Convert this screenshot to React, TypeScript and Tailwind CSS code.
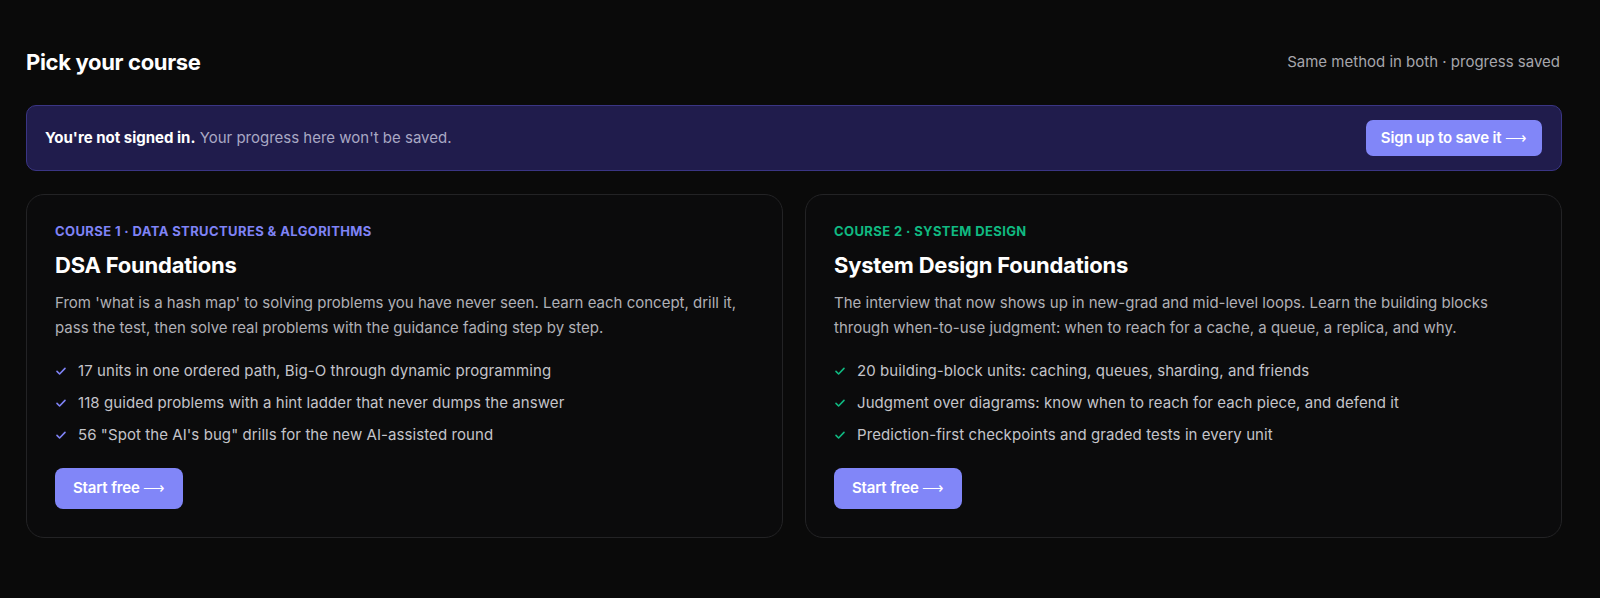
import React from 'react';

type Course = {
  label: string;
  title: string;
  description: string;
  points: string[];
  accent: 'indigo' | 'green';
};

const courses: Course[] = [
  {
    label: 'Course 1 · Data Structures & Algorithms',
    title: 'DSA Foundations',
    description:
      "From 'what is a hash map' to solving problems you have never seen. Learn each concept, drill it, pass the test, then solve real problems with the guidance fading step by step.",
    points: [
      '17 units in one ordered path, Big-O through dynamic programming',
      '118 guided problems with a hint ladder that never dumps the answer',
      '56 "Spot the AI\'s bug" drills for the new AI-assisted round',
    ],
    accent: 'indigo',
  },
  {
    label: 'Course 2 · System Design',
    title: 'System Design Foundations',
    description:
      'The interview that now shows up in new-grad and mid-level loops. Learn the building blocks through when-to-use judgment: when to reach for a cache, a queue, a replica, and why.',
    points: [
      '20 building-block units: caching, queues, sharding, and friends',
      'Judgment over diagrams: know when to reach for each piece, and defend it',
      'Prediction-first checkpoints and graded tests in every unit',
    ],
    accent: 'green',
  },
];

const Check: React.FC<{ className: string }> = ({ className }) => (
  <svg width="12" height="12" viewBox="0 0 12 12" fill="none" className={className}>
    <path d="M2 6.4l2.6 2.6L10 3.4" stroke="currentColor" strokeWidth="1.6" strokeLinecap="round" strokeLinejoin="round" />
  </svg>
);

const Arrow = () => <span className="font-['Liberation_Sans',sans-serif] font-normal">⟶</span>;

const CourseCard: React.FC<{ course: Course }> = ({ course }) => {
  const accentText = course.accent === 'indigo' ? 'text-[#7f83f6]' : 'text-[#10b981]';
  return (
    <div className="rounded-[18px] border border-[#232325] bg-[#0b0b0c] px-7 pt-7 pb-7">
      <div className={`text-[13px] leading-4 font-bold uppercase tracking-[0.03em] ${accentText}`}>{course.label}</div>
      <h3 className="mt-3 text-[22px] leading-7 font-bold tracking-[-0.01em] text-white">{course.title}</h3>
      <p className="mt-[11px] text-[15px] leading-[25px] text-[#b0b0b6] max-w-[710px]">{course.description}</p>
      <ul className="mt-5 flex flex-col gap-[10px]">
        {course.points.map((p, i) => (
          <li key={i} className="flex items-center gap-[11px] text-[15px] tracking-[0.005em] leading-[22px] text-[#c4c4ca]">
            <Check className={accentText} />
            <span>{p}</span>
          </li>
        ))}
      </ul>
      <button className="mt-[22px] h-[41px] px-[18px] rounded-[8px] bg-[#8186f8] text-[15px] font-semibold text-white tracking-[-0.01em]">
        Start free <Arrow />
      </button>
    </div>
  );
};

export default function App() {
  return (
    <div className="min-h-[598px] bg-[#0a0a0a] font-['Inter','Liberation_Sans',sans-serif]">
      <div className="w-[1536px] ml-[26px] pt-12">
        <div className="flex items-center justify-between h-7">
          <h2 className="text-[22px] font-bold tracking-[-0.015em] text-white">Pick your course</h2>
          <span className="text-[15px] text-[#a6a6ac] mr-[2px]">Same method in both · progress saved</span>
        </div>

        <div className="mt-[29px] flex items-center justify-between rounded-[10px] border border-[#3a3584] bg-[#201c4c] pl-[18px] pr-[19px] py-[14px]">
          <p className="text-[15px] text-[#a9a8c4]">
            <span className="font-bold text-white">You're not signed in.</span> Your progress here won't be saved.
          </p>
          <button className="h-9 px-[15px] rounded-[7px] bg-[#8186f8] text-[15px] font-semibold text-white tracking-[-0.01em]">
            Sign up to save it <Arrow />
          </button>
        </div>

        <div className="mt-[23px] grid grid-cols-2 gap-[22px]">
          {courses.map((c) => (
            <CourseCard key={c.title} course={c} />
          ))}
        </div>
      </div>
    </div>
  );
}
